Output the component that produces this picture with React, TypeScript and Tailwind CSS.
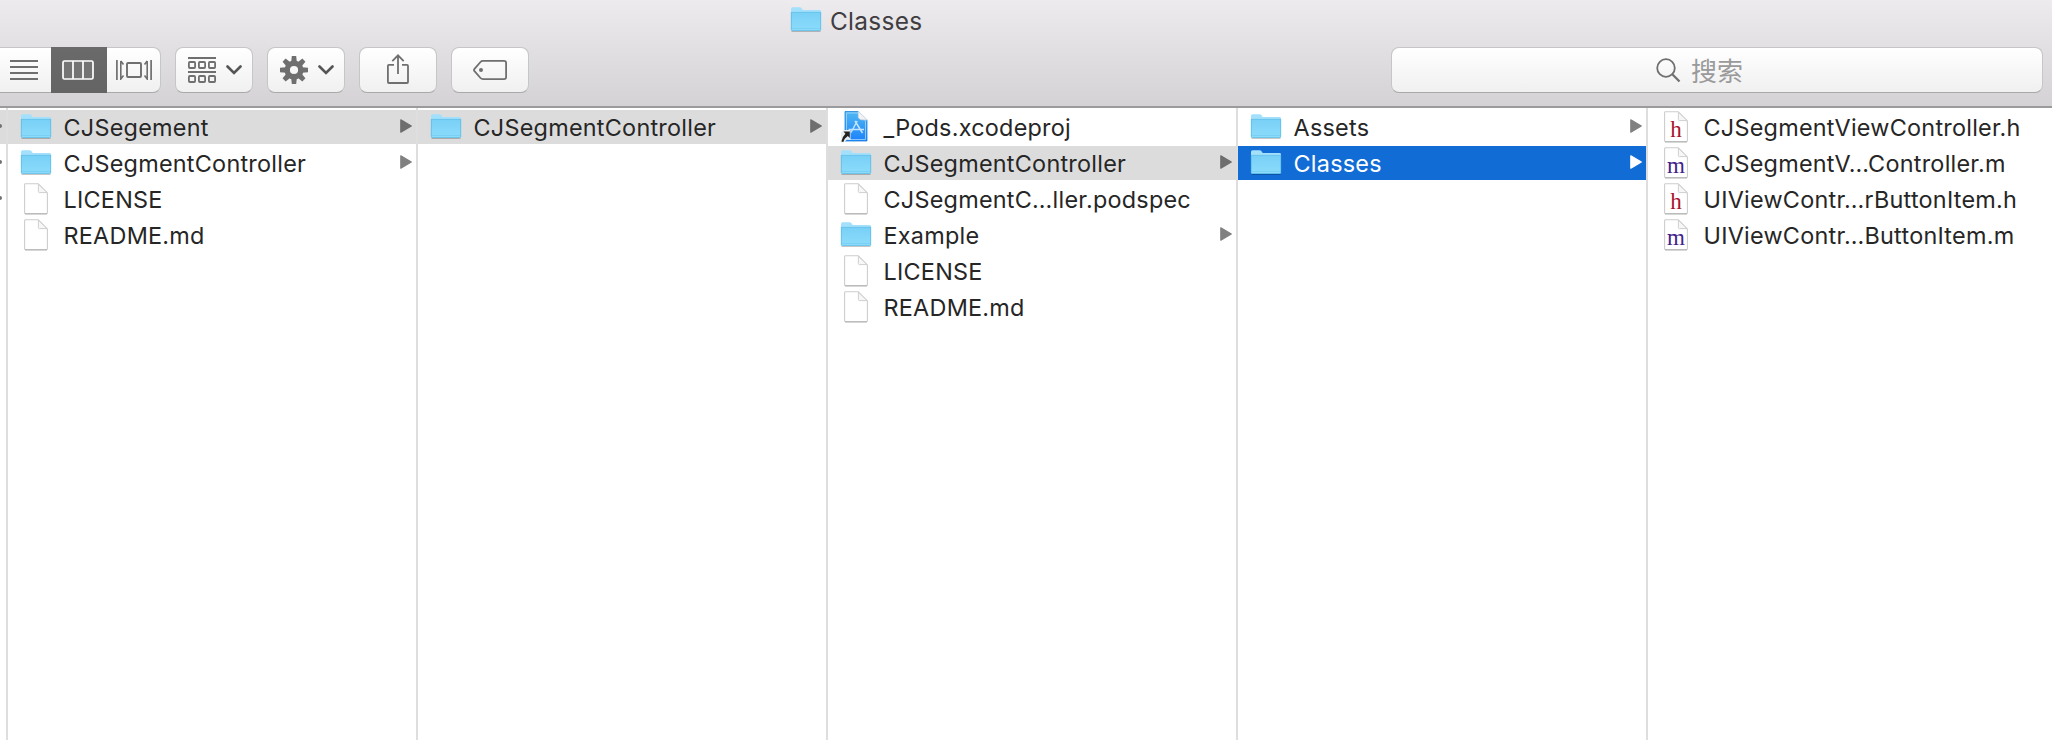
import React from "react";

type Kind = "folder" | "doc" | "h" | "m" | "xcode";
type State = "none" | "path" | "active";
type Item = { name: string; kind: Kind; state?: State };

const columns: Item[][] = [
  [
    { name: "CJSegement", kind: "folder", state: "path" },
    { name: "CJSegmentController", kind: "folder" },
    { name: "LICENSE", kind: "doc" },
    { name: "README.md", kind: "doc" },
  ],
  [{ name: "CJSegmentController", kind: "folder", state: "path" }],
  [
    { name: "_Pods.xcodeproj", kind: "xcode" },
    { name: "CJSegmentController", kind: "folder", state: "path" },
    { name: "CJSegmentC…ller.podspec", kind: "doc" },
    { name: "Example", kind: "folder" },
    { name: "LICENSE", kind: "doc" },
    { name: "README.md", kind: "doc" },
  ],
  [
    { name: "Assets", kind: "folder" },
    { name: "Classes", kind: "folder", state: "active" },
  ],
  [
    { name: "CJSegmentViewController.h", kind: "h" },
    { name: "CJSegmentV…Controller.m", kind: "m" },
    { name: "UIViewContr…rButtonItem.h", kind: "h" },
    { name: "UIViewContr…ButtonItem.m", kind: "m" },
  ],
];

function FolderIcon() {
  return (
    <svg width="32" height="32" viewBox="0 0 32 32" className="shrink-0">
      <defs>
        <linearGradient id="folderFront" x1="0" y1="0" x2="0" y2="1">
          <stop offset="0" stopColor="#78d0f6" />
          <stop offset="1" stopColor="#8cdcfb" />
        </linearGradient>
      </defs>
      <path d="M1.5 27.4h29" stroke="#000" strokeOpacity=".22" strokeWidth="1.2" />
      <path d="M1 5q0-1.8 1.6-1.8h7.2q1 0 1.7 1l1.2 1.9H29.500q1.500 0 1.500 1.400V26H1z" fill="#a2e0fb" />
      <path d="M1 8.300h30V25.500q0 1.300-1.300 1.300H2.300Q1 26.800 1 25.500z" fill="url(#folderFront)" />
      <path d="M1.500 8.400h29" stroke="#62bfe8" strokeWidth=".8" />
      <path d="M1.500 24.500h29" stroke="#72cbf0" strokeWidth=".7" />
      <path d="M1.300 8v17.500q0 1 1 1h27.400q1 0 1-1V8" fill="none" stroke="#58b8e2" strokeWidth=".7" />
    </svg>
  );
}

function DocIcon({ letter }: { letter?: "h" | "m" }) {
  return (
    <svg width="32" height="32" viewBox="0 0 32 32" className="shrink-0">
      <path d="M5.500 .8H18.200L27.400 10V29.800q0 .9-.9.9H5.500q-.9 0-.9-.9V1.700q0-.9.9-.9z" fill="#fff" stroke="#cdcdcd" strokeWidth="1.100" />
      <path d="M5 30.900h22" stroke="#aaa" strokeWidth="1" />
      <path d="M18.400 1.200V8.600q0 1 1 1H27z" fill="#f7f7f7" stroke="#cfcfcf" strokeWidth="1" />
      {letter && (
        <text
          x="16"
          y="26"
          textAnchor="middle"
          fontFamily="Liberation Serif, serif"
          fontSize="23"
          fill={letter === "h" ? "#a8142e" : "#43218a"}
        >
          {letter}
        </text>
      )}
    </svg>
  );
}

function XcodeIcon() {
  return (
    <svg width="32" height="32" viewBox="0 0 32 32" className="shrink-0">
      <defs>
        <linearGradient id="xcodeFill" x1="0" y1="0" x2="0" y2="1">
          <stop offset="0" stopColor="#50b8f2" />
          <stop offset="1" stopColor="#1c82fb" />
        </linearGradient>
      </defs>
      <path d="M5 .5H18.500L27 9V30H5z" fill="url(#xcodeFill)" stroke="#1f84dc" strokeWidth=".8" />
      <path d="M6.500 2H18l7.500 8V28.500H6.500z" fill="none" stroke="#a5d8fb" strokeWidth=".8" />
      <path d="M18.300 .3V6.500q1 2 3 2.200L27.500 9z" fill="#f3f3f3" stroke="#cfd6dc" strokeWidth=".7" />
      <path d="M17.200 10L11 21.500M15 10l7.500 12M8.500 18.500h15.500" fill="none" stroke="#c2e5fd" strokeWidth="1.500" />
      <path d="M1 21.500l3-2.500h6.500V29L7 28.500 4 31.500H1z" fill="#e9eef2" />
      <path d="M3.500 20.500H9.800V27L7.800 25Q4.500 27.200 3.300 31L1.400 30.500Q2 26 5.400 22.700z" fill="#222" />
    </svg>
  );
}

function ItemIcon({ kind }: { kind: Kind }) {
  if (kind === "folder") return <FolderIcon />;
  if (kind === "xcode") return <XcodeIcon />;
  return <DocIcon letter={kind === "doc" ? undefined : kind} />;
}

function Row({ item }: { item: Item }) {
  const state = item.state ?? "none";
  const bg = state === "active" ? "bg-[#116cd6] text-white" : state === "path" ? "bg-[#dcdcdc] text-[#262626]" : "text-[#262626]";
  const arrow = state === "active" ? "#ffffff" : state === "path" ? "#6e6e6e" : "#808080";
  return (
    <div className={`flex h-[34px] items-center pr-[4px] pl-[12px] ${bg}`}>
      <ItemIcon kind={item.kind} />
      <span className="ml-[11.5px] flex-1 pt-[2px] text-[23.4px] leading-[34px] font-[440] tracking-[0.25px] whitespace-nowrap">
        {item.name}
      </span>
      {item.kind === "folder" && (
        <svg width="12" height="14" viewBox="0 0 12 14" className="mb-[2px] shrink-0">
          <path d="M.8 .8L11.300 7 .8 13.200z" fill={arrow} stroke={arrow} strokeWidth="1.200" strokeLinejoin="round" />
        </svg>
      )}
    </div>
  );
}

function Button({ className = "", children }: { className?: string; children: React.ReactNode }) {
  return (
    <div
      className={`flex h-[46px] items-center justify-center rounded-[8px] border border-[#c6c5c7] border-b-[#a9a8aa] bg-linear-to-b from-white to-[#f0f0f0] ${className}`}
    >
      {children}
    </div>
  );
}

function Chevron() {
  return (
    <svg width="16" height="10" viewBox="0 0 16 10">
      <path d="M1.500 1.500L8 8l6.500-6.500" fill="none" stroke="#555" strokeWidth="2.600" strokeLinecap="round" />
    </svg>
  );
}

function Toolbar() {
  const g = "#6f6f6f";
  return (
    <div className="flex h-[46px] items-center">
      <div className="flex h-[46px] w-[161px] items-center rounded-r-[8px] border border-l-0 border-[#c6c5c7] border-b-[#a9a8aa] bg-linear-to-b from-white to-[#f0f0f0]">
        <div className="flex w-[51px] justify-end pr-[13px]">
          <svg width="28" height="20" viewBox="0 0 28 20">
            <path d="M0 1h28M0 7h28M0 13h28M0 19h28" stroke={g} strokeWidth="1.800" />
          </svg>
        </div>
        <div className="-my-px flex h-[46px] w-[56px] items-center justify-center bg-linear-to-b from-[#6a6a6a] to-[#646464] pr-[2px]">
          <svg width="32" height="20" viewBox="0 0 32 20">
            <rect x="1" y="1" width="30" height="18" rx="1.500" fill="#747474" stroke="#fff" strokeWidth="1.700" />
            <path d="M11 1v18M21 1v18" stroke="#fff" strokeWidth="1.700" />
          </svg>
        </div>
        <div className="flex flex-1 pl-[9px]">
          <svg width="36" height="20" viewBox="0 0 36 20">
            <rect x="11" y="3" width="14" height="14" rx="1" fill="none" stroke={g} strokeWidth="1.900" />
            <path d="M.9 0v20M35.100 0v20" stroke={g} strokeWidth="1.700" />
            <path d="M4.800 1v18L7.500 15.500M4.800 1L7.500 4.500M31.200 1v18l-2.700-3.500M31.200 1l-2.700 3.500" fill="none" stroke={g} strokeWidth="1.600" />
          </svg>
        </div>
      </div>

      <Button className="ml-[14px] w-[78px] gap-[10px] pl-[2px]">
        <svg width="28" height="26" viewBox="0 0 28 26">
          <path d="M0 1h28M0 15h28" stroke={g} strokeWidth="1.900" />
          {[5, 19].map((y) =>
            [0.9, 10.9, 20.9].map((x) => (
              <rect key={`${x}-${y}`} x={x} y={y} width="6.200" height="6" rx="1" fill="none" stroke={g} strokeWidth="1.800" />
            )),
          )}
        </svg>
        <Chevron />
      </Button>

      <Button className="ml-[14px] w-[78px] gap-[10px] pl-[2px]">
        <svg width="28" height="28" viewBox="-14 -14 28 28">
          {[0, 45, 90, 135, 180, 225, 270, 315].map((a) => (
            <path key={a} d="M-2.800-8L-2.200-14H2.200L2.800-8z" fill={g} transform={`rotate(${a})`} />
          ))}
          <circle r="6.800" fill="none" stroke={g} strokeWidth="5.400" />
        </svg>
        <Chevron />
      </Button>

      <Button className="ml-[14px] w-[78px]">
        <svg width="22" height="30" viewBox="0 0 22 30" className="mb-[2px]">
          <path d="M7 10.900H1.900Q.9 10.900 .9 11.900V28q0 1 1 1H20q1 0 1-1V11.900q0-1-1-1H15" fill="none" stroke={g} strokeWidth="1.800" />
          <path d="M11 20V1.500M5.300 7.200L11 1.300l5.700 5.900" fill="none" stroke={g} strokeWidth="1.800" />
        </svg>
      </Button>

      <Button className="ml-[14px] w-[78px]">
        <svg width="34" height="20" viewBox="0 0 34 20">
          <path d="M10 .9H31Q33.100 .9 33.100 3V17q0 2.100-2.100 2.100H10Q8.500 19.100 7.500 18L1.500 11.200Q.5 10 1.500 8.800L7.500 2Q8.500 .9 10 .9z" fill="none" stroke={g} strokeWidth="1.800" />
          <circle cx="8" cy="10" r="2" fill={g} />
        </svg>
      </Button>

      <Button className="mr-[9px] ml-auto w-[652px] gap-[10px] pr-[35px]">
        <svg width="25" height="25" viewBox="0 0 25 25" className="mt-px">
          <circle cx="10" cy="10" r="8.800" fill="none" stroke={g} strokeWidth="1.800" />
          <path d="M16.300 16.300L23.500 23.500" stroke={g} strokeWidth="2.200" />
        </svg>
        <span className="font-['Noto_Sans_CJK_SC',sans-serif] text-[26px] leading-[44px] text-[#9a9a9a]">搜索</span>
      </Button>
    </div>
  );
}

export default function App() {
  return (
    <div className="flex h-[740px] w-[2052px] flex-col overflow-hidden bg-white font-['Inter',sans-serif]">
      <header className="flex h-[108px] shrink-0 flex-col border-b-2 border-[#9b9a9c] bg-linear-to-b from-[#edebee] to-[#d4d2d5]">
        <div className="flex h-[47px] items-start pt-[4px] pl-[790px]">
          <FolderIcon />
          <span className="ml-[8px] text-[24.400px] leading-[34px] font-[440] tracking-[0.3px] text-[#3f3d41]">Classes</span>
        </div>
        <Toolbar />
      </header>
      <main className="flex flex-1">
        <div className="flex w-[8px] shrink-0 flex-col gap-[2px] border-r-2 border-[#dedede] pt-[2px]">
          {["bg-[#dcdcdc]", "", ""].map((bg, i) => (
            <div key={i} className={`flex h-[34px] items-center ${bg}`}>
              <div className="mb-[2px] h-[4px] w-[2px] rounded-r-full bg-[#707070]" />
            </div>
          ))}
        </div>
        {columns.map((items, i) => (
          <div
            key={i}
            className={`flex shrink-0 flex-col gap-[2px] pt-[2px] ${i < 4 ? "w-[410px] border-r-2 border-[#dedede]" : "w-[404px]"}`}
          >
            {items.map((item) => (
              <Row key={item.name} item={item} />
            ))}
          </div>
        ))}
      </main>
    </div>
  );
}
